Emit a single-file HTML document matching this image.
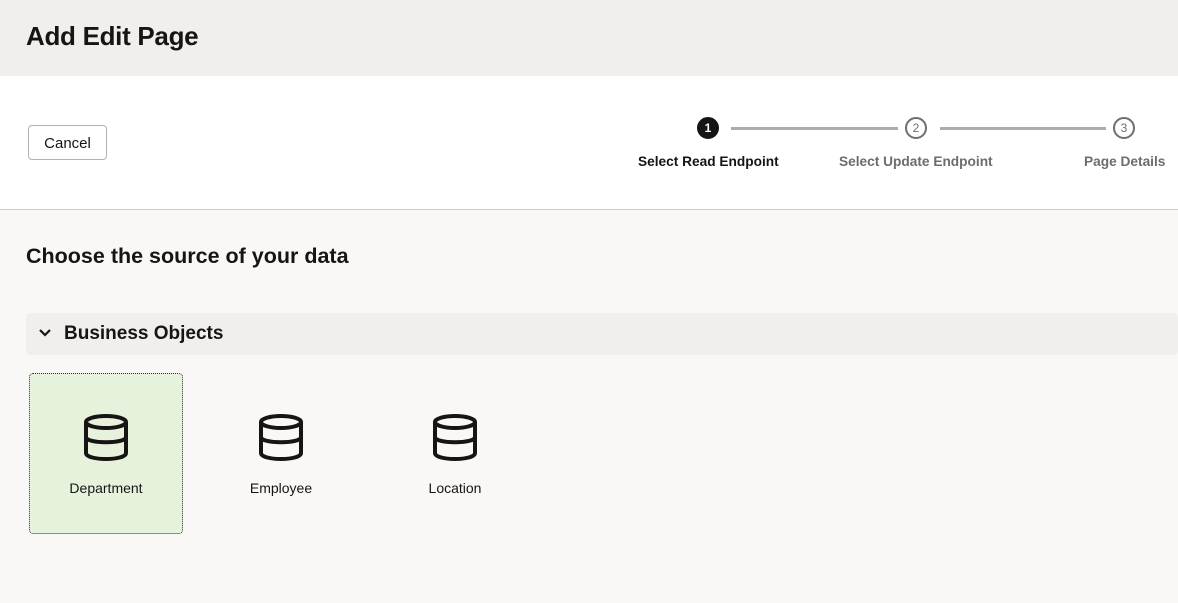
<!DOCTYPE html>
<html><head><style>
*{margin:0;padding:0;box-sizing:border-box}
body{width:1178px;height:603px;overflow:hidden;background:#f9f8f6;font-family:"Liberation Sans",sans-serif;color:#161513;position:relative}
.hdr{position:absolute;left:0;top:0;width:1178px;height:76px;background:#f1efed}
.hdr h1{position:absolute;left:26px;top:21px;font-size:26px;font-weight:bold;letter-spacing:-0.3px}
.bar{position:absolute;left:0;top:76px;width:1178px;height:134px;background:#fff;border-bottom:1px solid #d0cdc9}
.btn{position:absolute;left:28px;top:125px;width:79px;height:35px;border:1px solid #b5b2ae;border-radius:4px;background:#fff;font-size:15px;text-align:center;line-height:35px}
.circ{position:absolute;width:22px;height:22px;border-radius:50%;font-size:12px;text-align:center;line-height:18px;border:2px solid #6f6c69;color:#6f6c69;background:#fff}
.line{position:absolute;top:127px;height:3px;background:#aeaba8}
.lbl{position:absolute;top:154px;font-size:13.7px;font-weight:bold;color:#6f6c69;white-space:nowrap}
h2{position:absolute;left:26px;top:244px;font-size:21.5px;font-weight:bold}
.sec{position:absolute;left:26px;top:313px;width:1152px;height:42px;background:#f1efed;border-radius:4px}
.sec span{position:absolute;left:38px;top:10px;font-size:19px;font-weight:bold}
.card{position:absolute;top:373px;width:154px;height:161px;text-align:center;font-size:14px}
.card svg{position:absolute;left:53px;top:40px}
.card div{position:absolute;left:0;right:0;top:107px}
</style></head><body>
<div class="hdr"><h1>Add Edit Page</h1></div>
<div class="bar"></div>
<div class="btn">Cancel</div>
<div class="circ" style="left:697px;top:117px;background:#161513;border-color:#161513;color:#fff;font-weight:bold">1</div>
<div class="line" style="left:731px;width:167px"></div>
<div class="circ" style="left:905px;top:117px">2</div>
<div class="line" style="left:940px;width:166px"></div>
<div class="circ" style="left:1113px;top:117px">3</div>
<div class="lbl" style="left:638px;color:#161513">Select Read Endpoint</div>
<div class="lbl" style="left:839px">Select Update Endpoint</div>
<div class="lbl" style="left:1084px">Page Details</div>
<h2>Choose the source of your data</h2>
<div class="sec"><svg style="position:absolute;left:12px;top:15px" width="14" height="10" viewBox="0 0 14 10"><path d="M2 2 L7 7 L12 2" fill="none" stroke="#161513" stroke-width="2.2"/></svg><span>Business Objects</span></div>
<div class="card" style="left:29px;background:#e6f2dc;border:1px dotted #333;border-radius:4px"><svg style="left:52px;top:39px" width="48" height="48" viewBox="0 0 48 48"><g fill="none" stroke="#161513" stroke-width="4"><ellipse cx="24" cy="9" rx="20" ry="6"/><path d="M4 9 V40 C4 48 44 48 44 40 V9"/><path d="M4 24 C4 31 44 31 44 24"/></g></svg><div style="top:106px">Department</div></div>
<div class="card" style="left:204px"><svg width="48" height="48" viewBox="0 0 48 48"><g fill="none" stroke="#161513" stroke-width="4"><ellipse cx="24" cy="9" rx="20" ry="6"/><path d="M4 9 V40 C4 48 44 48 44 40 V9"/><path d="M4 24 C4 31 44 31 44 24"/></g></svg><div>Employee</div></div>
<div class="card" style="left:378px"><svg width="48" height="48" viewBox="0 0 48 48"><g fill="none" stroke="#161513" stroke-width="4"><ellipse cx="24" cy="9" rx="20" ry="6"/><path d="M4 9 V40 C4 48 44 48 44 40 V9"/><path d="M4 24 C4 31 44 31 44 24"/></g></svg><div>Location</div></div>
</body></html>
